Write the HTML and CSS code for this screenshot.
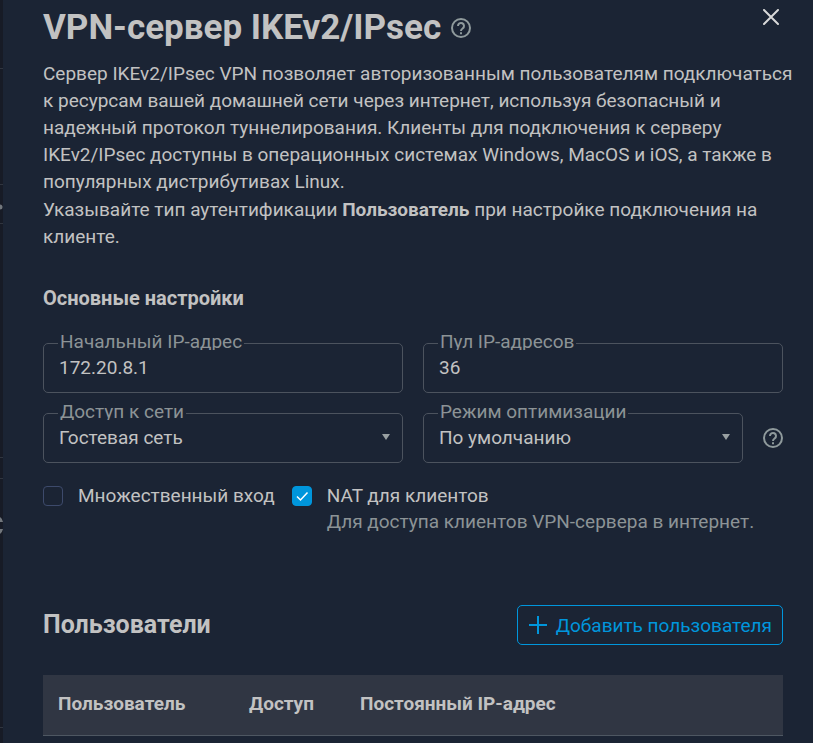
FILE: index.html
```
<!DOCTYPE html>
<html lang="ru">
<head>
  <meta charset="UTF-8">
  <meta name="viewport" content="width=device-width, initial-scale=1">
  <title>VPN-сервер IKEv2/IPsec</title>
  <link rel="stylesheet" href="styles.css">
</head>
<body>

  <!-- Page under the panel -->
  <svg class="backdrop" width="3" height="743" aria-hidden="true">
    <path d="M0 68.5h3M0 184.5h3M0 223.5h3M0 457.5h3M0 478.5h3M0 727.5h3" stroke="#30353f"/>
    <circle cx="0" cy="207" r="2.5" fill="#72777d"/>
    <path d="M0 517q2 1 3 5H0zM0 534q2-1 3-5H0z" fill="#72777d"/>
  </svg>

  <main class="panel">
    <header class="panel-header">
      <h1>VPN-сервер IKEv2/IPsec</h1>
      <button class="icon-btn title-help" type="button" aria-label="Справка">
        <svg width="20" height="20" viewBox="0 0 20 20" fill="none" stroke="currentColor" stroke-width="2">
          <circle cx="10" cy="10" r="9"/>
          <path d="M7 8a3 3 0 1 1 4.700 2.400C10.600 11.200 10 11.600 10 13M10 14.200v2"/>
        </svg>
      </button>
      <button class="icon-btn close" type="button" aria-label="Закрыть">
        <svg width="16" height="16" viewBox="0 0 16 16" fill="none" stroke="currentColor" stroke-width="2" stroke-linecap="round">
          <path d="M1 1l14 14M15 1L1 15"/>
        </svg>
      </button>
    </header>

    <div class="intro">
      <p>Сервер IKEv2/IPsec VPN позволяет авторизованным пользователям подключаться к ресурсам вашей домашней сети через интернет, используя безопасный и надежный протокол туннелирования. Клиенты для подключения к серверу IKEv2/IPsec доступны в операционных системах Windows, MacOS и iOS, а также в популярных дистрибутивах Linux.</p>
      <p>Указывайте тип аутентификации <b>Пользователь</b> при настройке подключения на клиенте.</p>
    </div>

    <!-- Settings -->
    <form class="settings">
      <h3>Основные настройки</h3>

      <div class="fields">
        <fieldset class="field">
          <legend><label for="startIp">Начальный IP-адрес</label></legend>
          <input type="text" id="startIp" value="172.20.8.1">
        </fieldset>

        <fieldset class="field">
          <legend><label for="poolSize">Пул IP-адресов</label></legend>
          <input type="text" id="poolSize" value="36">
        </fieldset>

        <fieldset class="field">
          <legend><label for="access">Доступ к сети</label></legend>
          <select id="access">
            <option>Гостевая сеть</option>
          </select>
          <svg class="arrow" width="8" height="6" viewBox="0 0 8 6" aria-hidden="true"><path d="M0 0h8L4 6z" fill="currentColor"/></svg>
        </fieldset>

        <div class="field-row">
          <fieldset class="field">
            <legend><label for="mode">Режим оптимизации</label></legend>
            <select id="mode">
              <option>По умолчанию</option>
            </select>
            <svg class="arrow" width="8" height="6" viewBox="0 0 8 6" aria-hidden="true"><path d="M0 0h8L4 6z" fill="currentColor"/></svg>
          </fieldset>
          <button class="icon-btn field-help" type="button" aria-label="Справка">
            <svg width="20" height="20" viewBox="0 0 20 20" fill="none" stroke="currentColor" stroke-width="2">
              <circle cx="10" cy="10" r="9"/>
              <path d="M7 8a3 3 0 1 1 4.700 2.400C10.600 11.200 10 11.600 10 13M10 14.200v2"/>
            </svg>
          </button>
        </div>
      </div>

      <div class="checks">
        <div class="check">
          <input type="checkbox" id="multi">
          <label for="multi">Множественный вход</label>
        </div>
        <div class="check">
          <input type="checkbox" id="nat" aria-describedby="natHint" checked>
          <div>
            <label for="nat">NAT для клиентов</label>
            <p class="hint" id="natHint">Для доступа клиентов VPN-сервера в интернет.</p>
          </div>
        </div>
      </div>
    </form>

    <!-- Users -->
    <section class="users">
      <div class="users-header">
        <h2>Пользователи</h2>
        <button class="add-btn" type="button">
          <svg width="20" height="20" viewBox="0 0 20 20" fill="none" stroke="currentColor" stroke-width="2" aria-hidden="true">
            <path d="M10 1v18M1 10h18"/>
          </svg>
          Добавить пользователя
        </button>
      </div>

      <table>
        <thead>
          <tr>
            <th class="col-user">Пользователь</th>
            <th class="col-access">Доступ</th>
            <th>Постоянный IP-адрес</th>
          </tr>
        </thead>
      </table>
    </section>
  </main>

</body>
</html>
```
FILE: styles.css
```
* {
  margin: 0;
  padding: 0;
  box-sizing: border-box;
}

body {
  display: flex;
  min-height: 100vh;
  font-family: Roboto, "Liberation Sans", sans-serif;
  font-size: 19px;
  line-height: 27px;
  color: #c2c2c2;
  background-color: #171b26;
}

button, input, select {
  font: inherit;
  color: inherit;
  background: none;
  border: none;
}

button {
  cursor: pointer;
}

svg {
  display: block;
}

.backdrop {
  flex: none;
}

.panel {
  flex: 1;
  min-width: 0;
  padding: 7px 30px 0 40px;
  background-color: #1b2434;
}

.panel-header {
  display: flex;
  align-items: flex-start;
}

h1 {
  font-size: 35px;
  line-height: 42px;
}

h2 {
  font-size: 25px;
  line-height: 30px;
}

h3 {
  font-size: 20px;
  line-height: 24px;
}

.icon-btn {
  flex: none;
  color: #8f9a9c;
}

.title-help {
  margin: 11px 0 0 10px;
}

.close {
  margin: 2px 4px 0 auto;
  color: #d8d8d8;
}

.intro {
  margin: 11px -10px 0 0;
}

.intro p + p {
  margin-top: 1px;
}

/* Settings */
.settings h3 {
  margin: 36px 0 26px;
}

.fields {
  display: grid;
  grid-template-columns: 1fr 1fr;
  gap: 13px 20px;
}

.field-row {
  display: flex;
  align-items: center;
  gap: 20px;
}

.field {
  position: relative;
  flex: 1;
  min-width: 0;
  border: 1px solid #4c535e;
  border-radius: 5px;
}

legend {
  height: 14px;
  margin-left: 14px;
  padding: 0 2px;
  line-height: 12px;
  color: #8c9396;
  clip-path: inset(-6px 0 0 0);
}

.field input,
.field select {
  display: block;
  width: 100%;
  height: 34px;
  margin-bottom: 8px;
  padding: 0 15px;
  appearance: none;
  outline: none;
}

.arrow {
  position: absolute;
  right: 12px;
  bottom: 22px;
  color: #99a0a2;
  pointer-events: none;
}

.field-help {
  margin-top: 7px;
}

.checks {
  display: flex;
  gap: 17px;
  margin-top: 20px;
}

.check {
  display: flex;
  gap: 15px;
  line-height: 26px;
}

.check input {
  flex: none;
  width: 20px;
  height: 20px;
  margin-top: 3px;
  appearance: none;
  border: 1px solid #3d4a6b;
  border-radius: 4px;
}

.check input:checked {
  background: #0096dc url("data:image/svg+xml,%3Csvg xmlns='http://www.w3.org/2000/svg' viewBox='0 0 18 18'%3E%3Cpath d='M4 9.500l3.500 3.500L14.500 5.500' fill='none' stroke='white' stroke-width='1.500'/%3E%3C/svg%3E") center / 18px no-repeat;
  border-color: #0096dc;
}

.hint {
  color: #8c9396;
}

/* Users */
.users {
  margin-top: 70px;
}

.users-header {
  display: flex;
  align-items: center;
  justify-content: space-between;
}

.add-btn {
  display: flex;
  align-items: center;
  gap: 8px;
  height: 40px;
  padding: 0 10px;
  color: #0096dc;
  border: 1px solid #0096dc;
  border-radius: 5px;
}

table {
  width: 100%;
  margin-top: 30px;
  border-collapse: collapse;
  table-layout: fixed;
}

th {
  height: 60px;
  padding: 0 15px 3px;
  text-align: left;
  background-color: #303643;
  border-bottom: 1px solid #4e5762;
}

.col-user {
  width: 191px;
}

.col-access {
  width: 111px;
}
```
